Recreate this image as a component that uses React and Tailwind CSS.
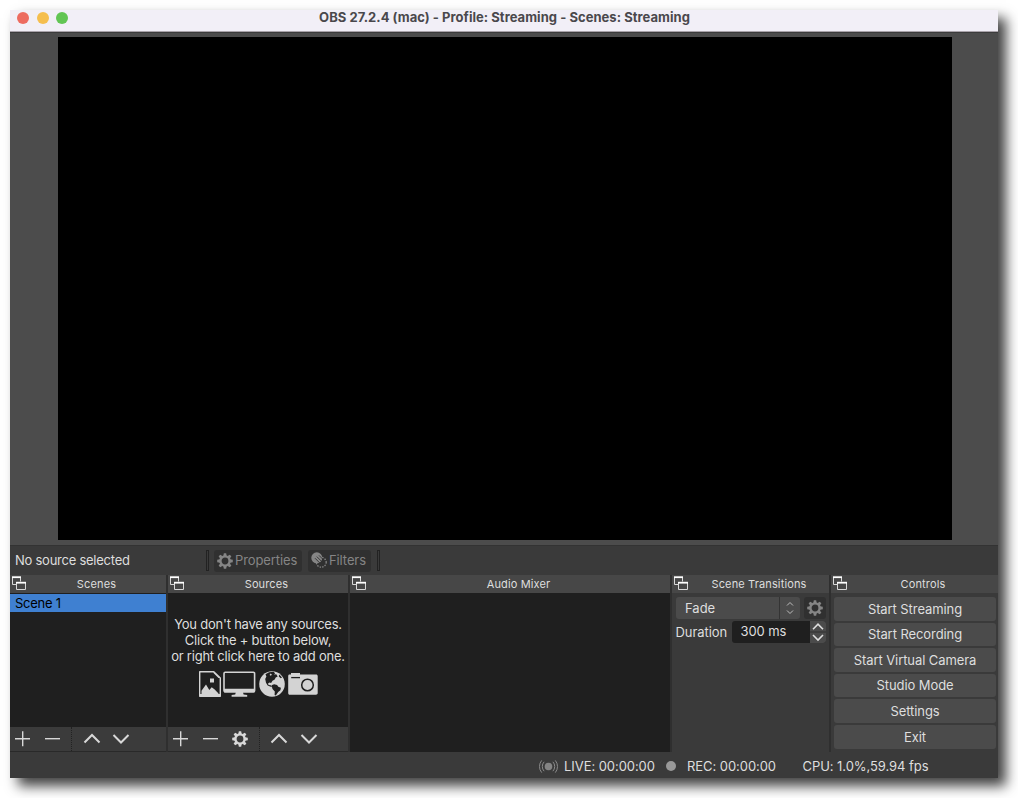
const TEETH = [0, 45, 90, 135, 180, 225, 270, 315];

const CONTROLS = [
  'Start Streaming',
  'Start Recording',
  'Start Virtual Camera',
  'Studio Mode',
  'Settings',
  'Exit',
];

function Gear({ className }) {
  return (
    <svg viewBox="0 0 16 16" className={className}>
      <circle cx="8" cy="8" r="4.6" fill="none" stroke="currentColor" strokeWidth="2.4" />
      {TEETH.map((angle) => (
        <path key={angle} d="M6.3 3 6.8 0.2h2.4L9.7 3z" fill="currentColor" transform={`rotate(${angle} 8 8)`} />
      ))}
    </svg>
  );
}

function FloatIcon() {
  return (
    <svg viewBox="0 0 14 14" className="mt-px ml-[1.5px] h-3.5 w-3.5 shrink-0" fill="none" stroke="#d8d8d8">
      <path d="M4.5 8.5h-4V1.5h8v4" />
      <path d="M0 1.2h9" stroke="#fff" strokeWidth="1.8" />
      <path d="M4.5 6.5h9v7h-9z" />
      <path d="M4 6.7h10" stroke="#fff" strokeWidth="1.8" />
    </svg>
  );
}

function Plus() {
  return (
    <svg viewBox="0 0 25 24" className="h-6 w-[25px]" stroke="#d8d8d8" strokeWidth="1.4">
      <path d="M5 11.7h15M12.7 4.2v15" />
    </svg>
  );
}

function Minus() {
  return (
    <svg viewBox="0 0 25 24" className="h-6 w-[25px]" stroke="#d8d8d8" strokeWidth="1.4">
      <path d="M5 11.7h15" />
    </svg>
  );
}

function Chevron({ down }) {
  return (
    <svg viewBox="0 0 25 24" className="h-6 w-[25px]" fill="none" stroke="#d8d8d8" strokeWidth="2">
      <path d={down ? 'M5.5 8l7.5 7.5L20.5 8' : 'M5.5 15.5L13 8l7.5 7.5'} />
    </svg>
  );
}

function DockHeader({ title }) {
  return (
    <div className="flex h-[18px] shrink-0 bg-[#474747]">
      <FloatIcon />
      <span className="flex-1 pl-[1.5px] text-center text-[11px] leading-[18px] tracking-[0.14px] text-[#dedede]">
        {title}
      </span>
    </div>
  );
}

function DockToolbar({ withGear }) {
  return (
    <div className="flex h-[25px] shrink-0 gap-[4.5px] border-b border-[#292929] bg-[#3b3b3b]">
      <Plus />
      <Minus />
      {withGear && (
        <div className="flex w-[25px] items-center justify-center text-[#d8d8d8]">
          <Gear className="h-4 w-4" />
        </div>
      )}
      <div className="mx-[2px] border-l border-dotted border-[#222]" />
      <Chevron />
      <Chevron down />
    </div>
  );
}

function Globe() {
  return (
    <svg viewBox="0 0 26 26" className="h-[26px] w-[26px]">
      <circle cx="13" cy="13" r="12.8" fill="currentColor" />
      <g fill="#1f1f1f">
        <path d="M6.5 3.2l3.6-2 4.4-.4 1.6 1.5-1 1.3 2.2-.3 1.4 2.2-2 1.1-1 2-2.2 1.2-1.4 2.2-1.6-.6-1.5 1 .6 1.5 2.2.4 1.4 1.9-1.5-.4-3-1.2-1.7-2.8-.8-3.7 1.2-2.6z" />
        <path d="M12.5 14.2l2.6-1 3 .8 1.2 1.7 2.6 1-.5 2.6-2.2 1.8-2.4 3.4-1.2-.4.2-3.5-2.3-2.7z" />
        <path d="M20.2 3.6l2.8 3-1.2.7-2-1.8z" />
      </g>
      <path d="M11.5 2.5l1.4 1-1 1.2-1.3-.8z" fill="currentColor" />
    </svg>
  );
}

function SourceIcons() {
  return (
    <div className="mt-[7px] flex items-center justify-center gap-[2.5px] pl-px text-[#d3d3d3]">
      <svg viewBox="0 0 22 26" className="h-[26px] w-[22px]">
        <path
          d="M1 .7h13.8L21.3 7v18.3H.7V.7z"
          fill="none"
          stroke="currentColor"
          strokeWidth="1.4"
          strokeLinejoin="round"
        />
        <path d="M2.5 22.8v-3L7 13.5l3.3 5.5 2.4-2.8 3 2.3 3.8 4v1.3h-17z" fill="currentColor" />
        <path d="M1 23h20v2H1zM11 7.5h4v4h-4zM14.5.7V2l5 5h1.8z" fill="currentColor" />
      </svg>
      <svg viewBox="0 0 33 26" className="h-[26px] w-[33px]">
        <rect x="1" y="1.2" width="30.6" height="19.6" rx="1.2" fill="none" stroke="currentColor" strokeWidth="1.6" />
        <path d="M1 17.7h30.6v3.7H1zM13.2 20h6.4l1 3.5 3.6.5v1.7H8.6V24l3.6-.5z" fill="currentColor" />
      </svg>
      <Globe />
      <svg viewBox="0 0 30 24" className="ml-px h-6 w-[30px]">
        <path d="M1.5 2.4H3V1h9v1.4h16c1 0 1.7.7 1.7 1.7v17c0 1-.7 1.7-1.7 1.7H1.8C.8 22.8.2 22 .2 21V4c0-1 .5-1.6 1.3-1.6z" fill="currentColor" />
        <circle cx="19.5" cy="13" r="5.8" fill="none" stroke="#1f1f1f" strokeWidth="1.5" />
        <path d="M3.2 5.6h8.8" stroke="#1f1f1f" strokeWidth="1.3" />
      </svg>
    </div>
  );
}

function FiltersIcon() {
  return (
    <svg viewBox="0 0 16 16" className="mb-px h-4 w-4 shrink-0">
      <circle cx="10.3" cy="10.3" r="4.9" fill="none" stroke="#858585" strokeWidth="1.3" strokeDasharray="1.4 1.2" />
      <circle cx="5.8" cy="5.8" r="5.5" fill="#858585" />
      <path d="M4 6.2l6 6M5.8 4.6l6.4 6.4M8 3.4l4 4" stroke="#303030" strokeWidth=".9" />
    </svg>
  );
}

function TitleBar() {
  return (
    <div className="flex h-[22px] items-center border-b border-[#aaa4ab] bg-[#f2eff7]">
      <div className="flex w-[58px] shrink-0 gap-[7.5px] pb-[5px] pl-[7px]">
        <span className="h-3 w-3 shrink-0 rounded-full bg-[#ed6b60]" />
        <span className="h-3 w-3 shrink-0 rounded-full bg-[#f5be4f]" />
        <span className="h-3 w-3 shrink-0 rounded-full bg-[#62c554]" />
      </div>
      <h1 className="flex-1 pr-[57px] pb-[7px] text-center text-[13px] leading-4 font-bold tracking-[0.04px] text-[#4a484c]">
        OBS 27.2.4 (mac) - Profile: Streaming - Scenes: Streaming
      </h1>
    </div>
  );
}

function ContextBar() {
  return (
    <div className="flex h-[30px] items-center border-t border-[#333] bg-[#3a3a3a] text-[13px]">
      <span className="w-[196px] pl-[5px] tracking-[-0.25px] text-[#dedede]">No source selected</span>
      <div className="h-[21px] w-[3px] border border-[#222]" />
      <div className="ml-[5px] flex h-[22px] w-[88px] items-center gap-[2px] rounded-[3px] bg-[#303030] pl-[3px] text-[#858585]">
        <Gear className="h-4 w-4 shrink-0" />
        <span className="tracking-[-0.1px]">Properties</span>
      </div>
      <div className="ml-1.5 flex h-[22px] w-[63px] items-center gap-[2px] rounded-[3px] bg-[#303030] pl-[3px] text-[#858585]">
        <FiltersIcon />
        <span className="tracking-[-0.1px]">Filters</span>
      </div>
      <div className="ml-1.5 h-[21px] w-[3px] border border-[#222]" />
    </div>
  );
}

function Transitions() {
  return (
    <div className="flex flex-1 flex-col bg-[#3a3a3a] pt-1 pl-[3.5px] text-[13px] text-[#dedede]">
      <div className="flex h-[22px]">
        <div className="flex w-[124px] rounded-[3px] bg-[#4b4b4b]">
          <span className="flex-1 pl-[9.5px] leading-[22px]">Fade</span>
          <div className="flex w-[21px] items-center justify-center border-l border-[#343434]">
            <svg viewBox="0 0 8 14" className="h-3.5 w-2" fill="none" stroke="#bdbdbd">
              <path d="M1 4.5l3-3 3 3M1 9.5l3 3 3-3" />
            </svg>
          </div>
        </div>
        <div className="ml-1 flex w-[22px] items-center justify-center rounded-[3px] bg-[#303030] text-[#858585]">
          <Gear className="h-4 w-4" />
        </div>
      </div>
      <div className="mt-0.5 flex h-[22px] items-center">
        <span className="w-[56px] pt-px tracking-[-0.06px]">Duration</span>
        <div className="flex h-full w-[94px] overflow-hidden rounded-[3px] bg-[#1f1f1f]">
          <span className="flex-1 pl-[9px] leading-[21px] tracking-[-0.1px]">300 ms</span>
          <svg viewBox="0 0 16 22" className="h-[22px] w-4 bg-[#4b4b4b]" fill="none">
            <path d="M0 11h16" stroke="#303030" strokeWidth="1.2" />
            <path d="M3 8.2l5-5 5 5M3 14l5 5 5-5" stroke="#dedede" strokeWidth="1.6" />
          </svg>
        </div>
      </div>
    </div>
  );
}

function StatusBar() {
  return (
    <div className="flex h-[26px] items-center bg-[#3a3a3a] pt-[3px] pl-[529px] text-[13px] tracking-[-0.06px] text-[#dedede]">
      <svg viewBox="0 0 20 16" className="h-4 w-5 shrink-0" fill="none" stroke="#8a8a8a">
        <circle cx="9.5" cy="7.5" r="3.8" fill="#858585" stroke="none" />
        <path d="M5.1 2.8a7 7 0 0 0 0 9.4M2.7 1.4a9.5 9.5 0 0 0 0 12.2M13.9 2.8a7 7 0 0 1 0 9.4M16.3 1.4a9.5 9.5 0 0 1 0 12.2" />
      </svg>
      <span className="ml-[5px] w-[102px] whitespace-nowrap">LIVE: 00:00:00</span>
      <span className="mb-px h-[10px] w-[10px] shrink-0 rounded-full bg-[#999]" />
      <span className="ml-[11px] w-[115.5px] whitespace-nowrap">REC: 00:00:00</span>
      <span className="whitespace-nowrap">CPU: 1.0%,59.94 fps</span>
    </div>
  );
}

export default function App() {
  return (
    <div className="h-[798px] w-[1018px] overflow-hidden bg-white pt-[10px] pl-[10px] font-['Inter',sans-serif]">
      <div className="flex h-[768px] w-[988px] flex-col bg-[#3a3a3a] shadow-[8px_8px_12px_rgba(0,0,0,0.75)]">
        <TitleBar />
        <div className="flex h-[513px] justify-center border-t border-[#3c3c3c] bg-[#4c4c4c] pt-1">
          <div className="mr-[-1px] h-[503px] w-[894px] bg-black" />
        </div>
        <ContextBar />
        <div className="flex h-[177px] gap-[2px] bg-[#2f2f2f]">
          <section className="flex w-[156px] flex-col bg-[#1f1f1f]">
            <DockHeader title="Scenes" />
            <div className="flex-1">
              <div className="mt-px h-[18px] bg-[#3f80d1] pl-[5px] text-[13px] leading-[18px] tracking-[-0.25px] text-black">
                Scene 1
              </div>
            </div>
            <DockToolbar />
          </section>
          <section className="flex w-[180px] flex-col bg-[#1f1f1f]">
            <DockHeader title="Sources" />
            <div className="flex-1 pt-[23px] text-center text-[13px] leading-4 tracking-[-0.22px] whitespace-nowrap text-[#dedede]">
              <p>You don't have any sources.</p>
              <p>Click the + button below,</p>
              <p>or right click here to add one.</p>
              <SourceIcons />
            </div>
            <DockToolbar withGear />
          </section>
          <section className="flex w-[320px] flex-col bg-[#1f1f1f]">
            <DockHeader title="Audio Mixer" />
          </section>
          <section className="flex w-[157px] flex-col">
            <DockHeader title="Scene Transitions" />
            <Transitions />
          </section>
          <section className="flex flex-1 flex-col">
            <DockHeader title="Controls" />
            <div className="flex flex-1 flex-col gap-[2px] bg-[#3a3a3a] pt-1 pr-[2px] pl-[3px]">
              {CONTROLS.map((label) => (
                <button
                  key={label}
                  type="button"
                  className="h-[23.6px] shrink-0 rounded-[3px] bg-[#4b4b4b] pt-px text-[13px] tracking-[-0.08px] text-[#dedede]"
                >
                  {label}
                </button>
              ))}
            </div>
          </section>
        </div>
        <StatusBar />
      </div>
    </div>
  );
}
